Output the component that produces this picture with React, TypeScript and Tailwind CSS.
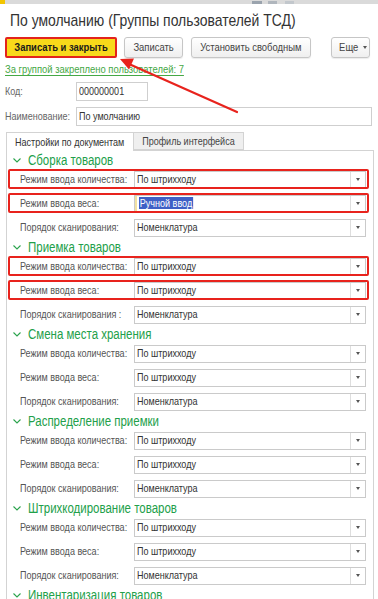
import type { ReactNode } from "react";

type Row = {
  label: string;
  value: string;
  boxed?: boolean;
  selected?: boolean;
};

type Section = { title: string; rows: Row[] };

const qty = "Режим ввода количества:";
const weight = "Режим ввода веса:";
const order = "Порядок сканирования:";

const sections: Section[] = [
  {
    title: "Сборка товаров",
    rows: [
      { label: qty, value: "По штрихходу", boxed: true },
      { label: weight, value: "Ручной ввод", boxed: true, selected: true },
      { label: order, value: "Номенклатура" },
    ],
  },
  {
    title: "Приемка товаров",
    rows: [
      { label: qty, value: "По штрихходу", boxed: true },
      { label: weight, value: "По штрихходу", boxed: true },
      { label: "Порядок сканирования :", value: "Номенклатура" },
    ],
  },
  {
    title: "Смена места хранения",
    rows: [
      { label: qty, value: "По штрихходу" },
      { label: weight, value: "По штрихходу" },
      { label: order, value: "Номенклатура" },
    ],
  },
  {
    title: "Распределение приемки",
    rows: [
      { label: qty, value: "По штрихходу" },
      { label: weight, value: "По штрихходу" },
      { label: order, value: "Номенклатура" },
    ],
  },
  {
    title: "Штрихкодирование товаров",
    rows: [
      { label: qty, value: "По штрихходу" },
      { label: weight, value: "По штрихходу" },
      { label: order, value: "Номенклатура" },
    ],
  },
  {
    title: "Инвентаризация товаров",
    rows: [
      { label: qty, value: "По штрихходу" },
      { label: weight, value: "По штрихходу" },
      { label: order, value: "Номенклатура" },
    ],
  },
];

// the source screen is squeezed horizontally, so text is drawn a bit narrower
function T({ children, center, className = "" }: { children: ReactNode; center?: boolean; className?: string }) {
  return (
    <span
      className={`inline-block scale-x-[0.82] whitespace-nowrap ${center ? "origin-center" : "origin-left"} ${className}`}
    >
      {children}
    </span>
  );
}

function Button({ children, className }: { children: ReactNode; className: string }) {
  return (
    <div
      className={`flex h-[21px] items-center justify-center rounded-[3px] border border-[#c6c6c6] bg-gradient-to-b from-white to-[#efefef] text-[11.5px] text-[#444] shadow-[0_1px_1px_rgba(0,0,0,0.08)] ${className}`}
    >
      {children}
    </div>
  );
}

function Caret() {
  return <span className="h-0 w-0 border-x-[2.5px] border-t-[3px] border-x-transparent border-t-[#555]" />;
}

function Select({ value, selected }: { value: string; selected?: boolean }) {
  return (
    <div className="flex h-[18px] flex-1 border border-[#cacaca] bg-white">
      {selected && <span className="w-[2px] bg-[#f3e2a2]" />}
      <div className="flex flex-1 items-center pl-[2px] text-[11px] text-[#333]">
        <T>{selected ? <span className="bg-[#3f5fc6] px-px leading-[13px] text-white">{value}</span> : value}</T>
      </div>
      <div className="flex w-[15px] items-center justify-center border-l border-[#dedede]">
        <Caret />
      </div>
    </div>
  );
}

function Chevron() {
  return (
    <svg width="8" height="5" viewBox="0 0 8 5" fill="none" aria-hidden="true">
      <path d="M0.5 0.5L4 4L7.5 0.5" stroke="#2aa34c" strokeWidth="1.1" />
    </svg>
  );
}

export default function App() {
  return (
    <div className="relative h-[599px] w-[378px] overflow-hidden bg-white font-['Liberation_Sans',Arial,sans-serif]">
      {/* window chrome, cut off at the top */}
      <div className="flex h-[4px] items-end bg-[#dadada]">
        <span className="h-[4px] w-[5px] bg-[#f2c500]" />
        <span className="ml-[247px] h-[3px] w-[10px] bg-[#9aa3ad]" />
        <span className="ml-[6px] h-[3px] w-[9px] bg-[#b0b6bd]" />
        <span className="ml-[8px] h-[3px] w-[9px] bg-[#c2c7cc]" />
      </div>

      <h1 className="pl-[10px] pt-[7px] text-[17px] leading-[20px] text-[#333]">
        <T>По умолчанию (Группы пользователей ТСД)</T>
      </h1>

      <div className="mt-[6px] flex pl-[5px]">
        <div className="flex h-[21px] w-[112px] items-center justify-center rounded-[2px] border-2 border-[#e3231c] bg-[#f8d91a] text-[11.5px] font-bold text-[#1a1a1a]">
          <T center>Записать и закрыть</T>
        </div>
        <Button className="ml-[7px] w-[59px]">
          <T center>Записать</T>
        </Button>
        <Button className="ml-[8px] w-[120px]">
          <T center>Установить свободным</T>
        </Button>
        <Button className="ml-[20px] w-[39px] gap-[3px] pl-[3px]">
          <T center>Еще</T>
          <Caret />
        </Button>
      </div>

      <div className="mt-[4px] flex h-[16px] items-center pl-[5px]">
        <T className="text-[11.5px] text-[#45a845] underline decoration-[#45a845] underline-offset-[2px]">
          За группой закреплено пользователей: 7
        </T>
      </div>

      <div className="mt-[4px] flex h-[19px] items-center pl-[5px] text-[11px]">
        <span className="w-[71px] text-[#666]">
          <T>Код:</T>
        </span>
        <div className="flex h-[19px] w-[72px] items-center border border-[#cfcfcf] pl-[2px] text-[#333]">
          <T>000000001</T>
        </div>
      </div>

      <div className="mt-[6px] flex h-[19px] items-center pl-[5px] text-[11px]">
        <span className="w-[71px] text-[#666]">
          <T>Наименование:</T>
        </span>
        <div className="flex h-[19px] w-[296px] items-center border border-[#cfcfcf] pl-[2px] text-[#333]">
          <T>По умолчанию</T>
        </div>
      </div>

      <div className="relative z-10 mt-[6px] -mb-px flex h-[19px] pl-[6px] text-[11px]">
        <div className="flex w-[128px] items-center justify-center border border-b-0 border-[#d3d3d3] bg-white text-[#333]">
          <T center>Настройки по документам</T>
        </div>
        <div className="flex h-[18px] w-[110px] items-center justify-center border border-l-0 border-[#d3d3d3] bg-[#efefef] text-[#444]">
          <T center>Профиль интерфейса</T>
        </div>
      </div>

      <div className="ml-[6px] w-[368px] border border-[#d3d3d3]">
        {sections.map((s) => (
          <div key={s.title} className="flex flex-col pb-px">
            <div className="flex h-[19px] items-center gap-[7px] pl-[6px]">
              <Chevron />
              <span className="text-[14px] text-[#22a04a]">
                <T>{s.title}</T>
              </span>
            </div>
            <div className="flex flex-col gap-[5px]">
              {s.rows.map((r, i) => (
                <div key={i} className="relative flex h-[19px] items-center pr-[7px]">
                  <span className="w-[127px] pl-[13px] text-[11px] text-[#555]">
                    <T>{r.label}</T>
                  </span>
                  <Select value={r.value} selected={r.selected} />
                  {r.boxed && (
                    <span className="pointer-events-none absolute -top-px bottom-0 left-px right-[4px] rounded-[2px] border-2 border-[#e8231d]" />
                  )}
                </div>
              ))}
            </div>
          </div>
        ))}
      </div>

      {/* annotation arrow */}
      <svg
        className="pointer-events-none absolute left-0 top-0"
        width="378"
        height="599"
        viewBox="0 0 378 599"
        aria-hidden="true"
      >
        <line x1="237" y1="112" x2="129" y2="64" stroke="#e8231d" strokeWidth="2.2" strokeLinecap="round" />
        <polygon points="120,59 134,58.5 129,69.5" fill="#e8231d" />
      </svg>
    </div>
  );
}
